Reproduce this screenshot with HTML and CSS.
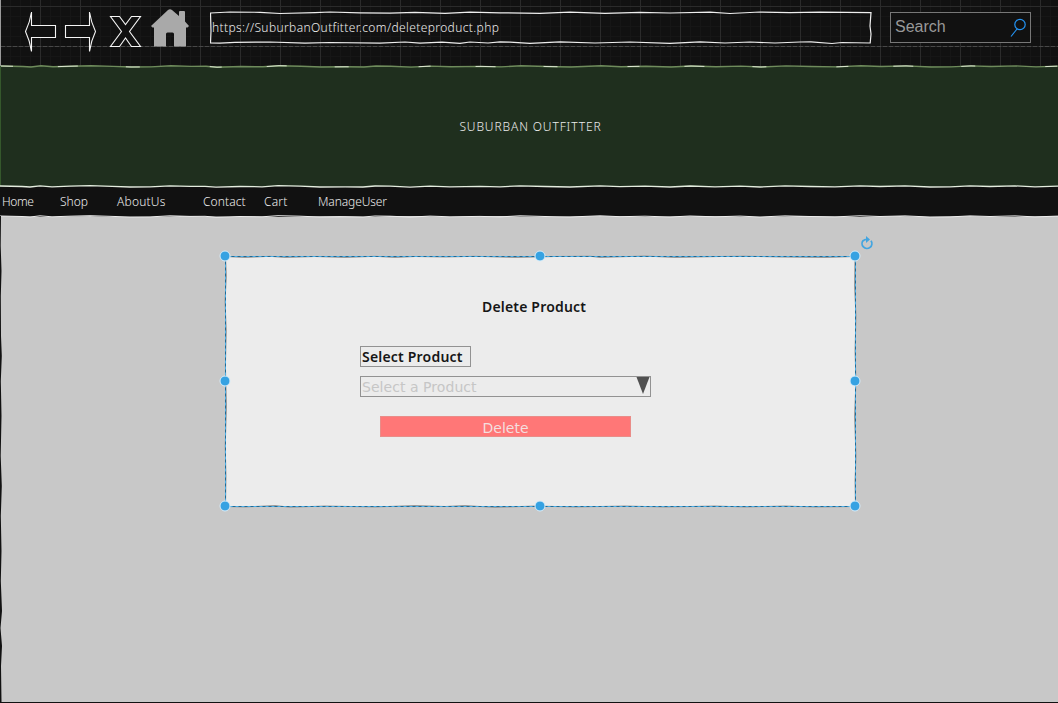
FILE: index.html
```html
<!DOCTYPE html>
<html lang="en">
<head>
<meta charset="utf-8">
<title>Suburban Outfitter</title>
<link rel="stylesheet" href="styles.css">
</head>
<body>
<svg class="defs" width="0" height="0">
  <defs>
    <path id="wave" d="M0 3L22 3.5L30 4L40 2.8L52 3.8L70 3.2L90 2.7L112 3.4L130 4L150 3.9L170 2.8L190 3.4L205 3.3L216 4.2L240 3.5L262 3.8L278 2.7L300 3.2L320 4L345 3.8L363 4L375 3L390 3.2L410 4.1L430 3.1L450 3.8L480 3.4L500 3.9L520 2.8L545 3.5L570 4L600 2.8L620 3.7L645 3.2L670 4L690 3L715 3.8L740 3.1L760 4L785 2.9L810 3.5L835 3.9L860 2.8L880 3.5L905 2.9L930 4L950 3.9L970 2.9L990 3.5L1015 2.9L1035 3.9L1058 3.1"/>
    <path id="frame" d="M.5 2L20 1L50 1.3L70 2.5L105 1.6L120 1L150 1.8L180 2.2L205 1.4L235 2.3L260 1.1L290 1.8L330 2.4L360 1.2L395 2.3L430 1.4L460 2L500 1.2L520 2.5L550 1L580 1.7L610 1.2L661 1.6L660 15L661 23L660.2 32L632 31.5L622 32.5L601 30.8L590 31L565 32L540 31L515 32L490 30.8L460 32.3L420 31L385 32L350 30.8L320 32.4L300 31.2L290 30.8L278 32L260 31L250 32.4L232 31.2L210 32.1L195 31L170 32.1L120 31.5L95 32.2L60 31L25 31.4L10 32.2L.5 31.8L1 20Z"/>
  </defs>
</svg>
<div class="window">
  <header class="toolbar">
    <svg class="nav-icons" width="200" height="60" viewBox="0 0 200 60">
      <g fill="#111" stroke="#f5f5f5" stroke-width="1.1">
        <path d="M31.5 12Q30 22 25.5 31.5Q30 41 31.5 51.5V37.5H55.5V25.5H31.5Z"/>
        <path d="M89.5 12Q91 22 95.5 31.5Q91 41 89.5 51.5V37.5H65.5V25.5H89.5Z"/>
        <path d="M110.5 16.5H119.5L125.5 24.5L131.5 16.5H140.5L129.5 31.5L140.5 46.5H131.5L125.5 38L119.5 46.5H110.5L121.5 31.5Z"/>
      </g>
      <path fill="#a9a9a9" d="M151 26L168 10Q170 8.500 172 10L179 16V12Q179 11 180 11H184Q185 11 185 12V21.500L189 26L187.500 27.500H186V46.500H174V34Q174 32.500 172.500 32.500H167.500Q166 32.500 166 34V46.500H154V27.500H152.500Z"/>
    </svg>
    <div class="address">
      <svg class="outline" width="662" height="34" viewBox="0 0 662 34"><use href="#frame" fill="none" stroke="#eee" stroke-width="1.2"/></svg>
      <span class="hand url">https://SuburbanOutfitter.com/deleteproduct.php</span>
    </div>
    <div class="search">
      <span>Search</span>
      <svg width="18" height="20" viewBox="0 0 18 20" fill="none" stroke="#2494f4" stroke-width="1.2"><circle cx="11" cy="7.500" r="5.200"/><path d="M8 12L2 19.500"/></svg>
    </div>
  </header>
  <section class="banner">
    <svg class="edge" width="1058" height="7" viewBox="0 0 1058 7"><use href="#wave" fill="none" stroke="#6f8c5c" stroke-width="1.4"/><use href="#wave" fill="none" stroke="#dbe6d0" stroke-width="1" stroke-dasharray="12 45 20 48 14 70"/></svg>
    <span class="hand title">SUBURBAN OUTFITTER</span>
  </section>
  <nav class="menu">
    <svg class="edge" width="1058" height="7" viewBox="0 0 1058 7"><use href="#wave" fill="none" stroke="#e4eddf" stroke-width="1.3"/></svg>
    <a class="hand home">Home</a><a class="hand shop">Shop</a><a class="hand about">AboutUs</a><a class="hand contact">Contact</a><a class="hand cart">Cart</a><a class="hand manage">ManageUser</a>
  </nav>
  <main class="page">
    <svg class="edge" width="1058" height="7" viewBox="0 0 1058 7"><path fill="#111" d="M0 0H1058V3L1000 4L970 3L930 4L900 3L860 4L800 3L760 4L700 3L650 4L600 3L550 4L500 3L450 4L420 3L390 3L370 4L340 3L280 4L250 3.5L230 4L180 3L150 4L110 4L90 3L50 4L0 3Z"/><use href="#wave" fill="none" stroke="#eee" stroke-width="1"/></svg>
    <svg class="side" width="3" height="486" viewBox="0 0 3 486"><path fill="#111" d="M0 0H1L.7 30L1.5 55L.8 80L1 120L1.8 140L.8 165L1.5 200L.7 240L1.8 270L.8 300L1.5 335L.8 365L2 395L.5 412L2 430L1 450L1.5 486H0Z"/></svg>
    <section class="card">
      <svg class="selection" width="660" height="280" viewBox="-15 -20 660 280">
        <path d="M.5.5L20 1.5L45 .3L60 1.5L90 .5L120 1.5L150 .3L170 1.5L190 .5L220 1L250 .3L290 1.5L330 .5L365 .2L375 1.5L420 0L450 1.5L495 .5L520 .2L555 1L600 1.5L630 .5L629.5 30L631 60L630 95L631 125L629.5 160L631 200L630 225L630.5 250.5L590 251L560 250L520 251L490 250L440 251L400 250L350 251L310 250L270 251.5L240 249.5L220 250.5L190 249.5L150 251L100 250L65 251.3L50 249.5L20 251L.5 250.5L1 220L.2 190L1.5 150L.4 110L1.3 75L0 45L1.4 20Z" fill="#ececec" stroke="#999" stroke-width="1"/>
        <rect x=".5" y=".5" width="630" height="250" fill="none" stroke="#4aaee6"/>
        <rect x=".5" y=".5" width="630" height="250" fill="none" stroke="#246b94" stroke-dasharray="3 3"/>
        <g fill="#36a2e2" stroke="#d7edfa" stroke-width="1">
          <circle cx="0" cy="0" r="5"/><circle cx="315" cy="0" r="5"/><circle cx="630" cy="0" r="5"/>
          <circle cx="0" cy="125" r="5"/><circle cx="630" cy="125" r="5"/>
          <circle cx="0" cy="250" r="5"/><circle cx="315" cy="250" r="5"/><circle cx="630" cy="250" r="5"/>
        </g>
      </svg>
      <svg class="rotate" width="14" height="16" viewBox="0 0 14 16"><path d="M3.300 4.300A4.900 4.900 0 1 0 11 4.800M3 4.800Q4.500 3.300 7 3.300" fill="none" stroke="#43a5e0" stroke-width="1.8"/><path d="M6 0L10 3.400L6 7Z" fill="#43a5e0"/></svg>
      <h1>Delete Product</h1>
      <label>Select Product</label>
      <div class="select"><span>Select a Product</span><svg width="14" height="20" viewBox="0 0 14 20"><path d="M.5 1H13.5L7 18Z" fill="#505050"/><path d="M7 18V20" stroke="#eee"/></svg></div>
      <button>Delete</button>
    </section>
  </main>
</div>
</body>
</html>
```
FILE: styles.css
```css
* { box-sizing: border-box; }
body { margin: 0; background: #111; }
.defs { position: absolute; }
.window { display: flex; flex-direction: column; width: 1058px; height: 703px; overflow: hidden; border-bottom: 1px solid #111; }
.hand { font-family: "Comic Sans MS", "Noto Sans", sans-serif; font-size: 12px; font-weight: 300; line-height: 18px; color: #ededed; white-space: nowrap; }
.toolbar {
  display: flex; flex: 0 0 66px; align-items: flex-start; border-left: 1px solid #999;
  background-color: #111;
  background-image:
    repeating-linear-gradient(90deg, #484848 0 4px, transparent 4px 6px),
    linear-gradient(#2b2b2b 1px, transparent 1px),
    linear-gradient(90deg, #2b2b2b 1px, transparent 1px),
    linear-gradient(#161616 1px, transparent 1px),
    linear-gradient(90deg, #161616 1px, transparent 1px);
  background-size: 100% 1px, 100% 40px, 40px 100%, 100% 10px, 10px 100%;
  background-position: 0 46px, 0 6px, 39px 0, 0 6px, 9px 0;
  background-repeat: no-repeat, repeat, repeat, repeat, repeat;
}
.nav-icons { flex: none; margin-left: -1px; }
.address { position: relative; display: flex; flex: none; align-items: center; width: 662px; height: 34px; margin: 11px 0 0 10px; }
.outline { position: absolute; left: 0; top: 0; }
.url { position: relative; padding-left: 2px; letter-spacing: .38px; }
.search { display: flex; flex: none; justify-content: space-between; align-items: center; width: 141px; height: 31px; margin: 12px 0 0 18px; padding: 0 3px 2px 4px; border: 1px solid #777; background: #111; color: #999; font: 16px "Liberation Sans", sans-serif; }
.banner { position: relative; display: flex; flex: 0 0 120px; justify-content: center; align-items: center; padding-top: 2px; background: #1f2f1e; border-left: 1px solid #35582c; }
.edge { position: absolute; left: 0; top: -3px; }
.title { padding-left: 2px; letter-spacing: .88px; }
.menu { position: relative; display: flex; flex: 0 0 30px; align-items: center; padding: 1px 0 0 2px; background: #111; }
.home { width: 58px; letter-spacing: -.4px; }
.shop { width: 57px; }
.about { width: 86px; letter-spacing: .2px; }
.contact { width: 61px; letter-spacing: .1px; }
.cart { width: 54px; letter-spacing: .2px; }
.manage { letter-spacing: -.1px; }
.page { position: relative; flex: 1; padding: 40px 0 0 225px; background: #c8c8c8; }
.side { position: absolute; left: 0; top: 0; }
.card { position: relative; display: flex; flex-direction: column; align-items: flex-start; width: 631px; height: 251px; padding: 41px 0 0 135px; }
.selection { position: absolute; left: -15px; top: -20px; }
.rotate { position: absolute; left: 635px; top: -20px; }
h1, label, .select, button { position: relative; }
h1 { margin: 0 0 29px 122px; font: 600 14px/20px "Noto Sans", sans-serif; letter-spacing: .18px; color: #161616; white-space: nowrap; }
label { width: 111px; height: 21px; padding-left: 1px; border: 1px solid #929292; font: 600 14px/19px "Noto Sans", sans-serif; letter-spacing: .2px; color: #161616; white-space: nowrap; }
.select { display: flex; justify-content: space-between; width: 291px; height: 21px; margin-top: 9px; padding-left: 1px; border: 1px solid #929292; font: 14px/21px "DejaVu Sans", sans-serif; letter-spacing: .05px; color: #c6c6c6; }
.select svg { margin-top: -1px; }
button { width: 251px; height: 21px; margin: 19px 0 0 20px; padding: 2px 0 0; border: 1px solid #e98c88; background: #ff7777; color: #f4dede; font: 14px/19px "DejaVu Sans", sans-serif; }
```
